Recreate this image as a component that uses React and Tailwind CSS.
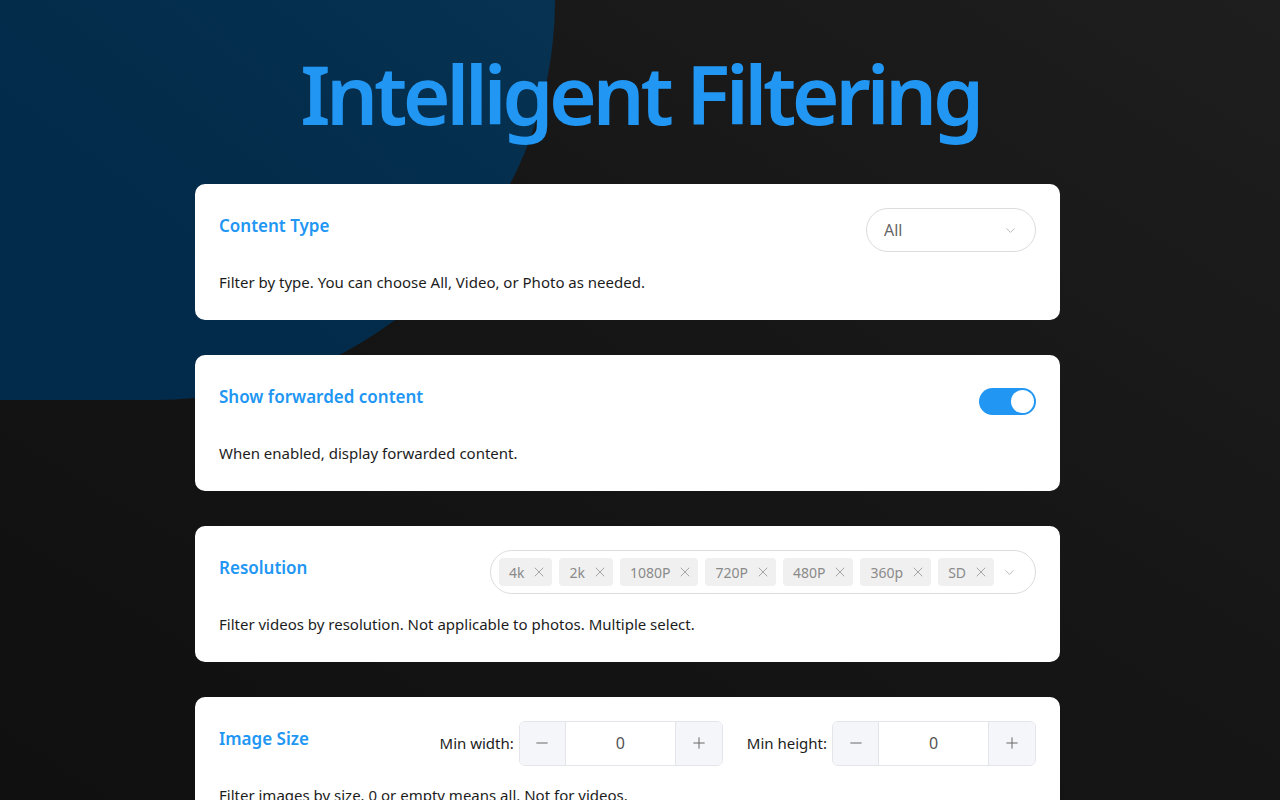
import React, { useState } from 'react';
import { ChevronDown, X, Minus, Plus } from 'lucide-react';

const font = { fontFamily: '"Noto Sans", "Open Sans", sans-serif' };

const Card = ({ title, description, children }) => {
    return (
        <div className='w-[865px] bg-white rounded-[10px] px-6 pt-6 pb-[26px]'>
            <div className='flex items-center justify-between h-11'>
                <h2 className='text-[17px] font-semibold text-[#2196f3] -mt-2'>{title}</h2>
                {children}
            </div>
            <p className='mt-[18px] text-[15px] leading-6 text-[#1c1c1c]'>{description}</p>
        </div>
    )
}

const Tag = ({ label }) => (
    <span className='flex items-center gap-[7px] h-7 pl-[10px] pr-[5px] rounded bg-[#f0f0f0] text-[14px] text-[#8a8a8a]'>
        {label}
        <X size={16} strokeWidth={1.3} className='text-[#999]' />
    </span>
)

const NumberBox = ({ label }) => (
    <div className='flex items-center gap-[5px]'>
        <span className='text-[15px] text-[#1c1c1c]'>{label}</span>
        <div className='flex h-[45px] w-[204px] border border-[#e3e5ea] rounded-md overflow-hidden'>
            <button className='w-[46px] flex items-center justify-center bg-[#f5f6f9] border-r border-[#e3e5ea] text-[#666]'>
                <Minus size={18} strokeWidth={1.3} />
            </button>
            <div className='flex-1 flex items-center justify-center text-[16px] text-[#555]'>0</div>
            <button className='w-[47px] flex items-center justify-center bg-[#f5f6f9] border-l border-[#e3e5ea] text-[#666]'>
                <Plus size={18} strokeWidth={1.3} />
            </button>
        </div>
    </div>
)

const App = () => {
    const [forwarded, setForwarded] = useState(true);

    return (
        <div style={font} className='relative w-full h-[800px] overflow-hidden bg-gradient-to-bl from-[#1e1e1e] via-[#151515] to-[#101010]'>
            {/* big blue blob top-left */}
            <div className='absolute left-[-495px] top-[-400px] w-[1050px] h-[800px] rounded-full bg-gradient-to-tr from-[#00284a] via-[#032c4b] to-[#0d3856]'></div>

            <div className='relative flex flex-col items-center'>
                <h1 className='mt-[52px] h-[132px] text-[82px] leading-none font-semibold text-[#2196f3] tracking-[-4.5px]'>Intelligent Filtering</h1>

                <div className='flex flex-col gap-[35px] mr-[25px]'>
                    <Card title='Content Type' description='Filter by type. You can choose All, Video, or Photo as needed.'>
                        <div className='flex items-center justify-between w-[170px] h-11 px-[17px] border border-[#dcdcdc] rounded-full'>
                            <span className='text-[16px] text-[#666]'>All</span>
                            <ChevronDown size={15} strokeWidth={1.3} className='text-[#aaa]' />
                        </div>
                    </Card>

                    <Card title='Show forwarded content' description='When enabled, display forwarded content.'>
                        <button
                            onClick={() => setForwarded(!forwarded)}
                            className={forwarded
                                ? 'w-[57px] h-[27px] rounded-full bg-[#2196f3] flex items-center justify-end px-[2px]'
                                : 'w-[57px] h-[27px] rounded-full bg-[#ccc] flex items-center justify-start px-[2px]'}
                        >
                            <span className='w-[23px] h-[23px] rounded-full bg-white'></span>
                        </button>
                    </Card>

                    <Card title='Resolution' description='Filter videos by resolution. Not applicable to photos. Multiple select.'>
                        <div className='flex items-center gap-[7px] w-[546px] h-11 pl-2 pr-[18px] border border-[#dcdcdc] rounded-full'>
                            {['4k', '2k', '1080P', '720P', '480P', '360p', 'SD'].map(r => <Tag key={r} label={r} />)}
                            <ChevronDown size={15} strokeWidth={1.3} className='ml-auto text-[#aaa]' />
                        </div>
                    </Card>

                    <Card title='Image Size' description='Filter images by size. 0 or empty means all. Not for videos.'>
                        <div className='flex items-center gap-6'>
                            <NumberBox label='Min width:' />
                            <NumberBox label='Min height:' />
                        </div>
                    </Card>
                </div>
            </div>
        </div>
    );
};

export default App;
